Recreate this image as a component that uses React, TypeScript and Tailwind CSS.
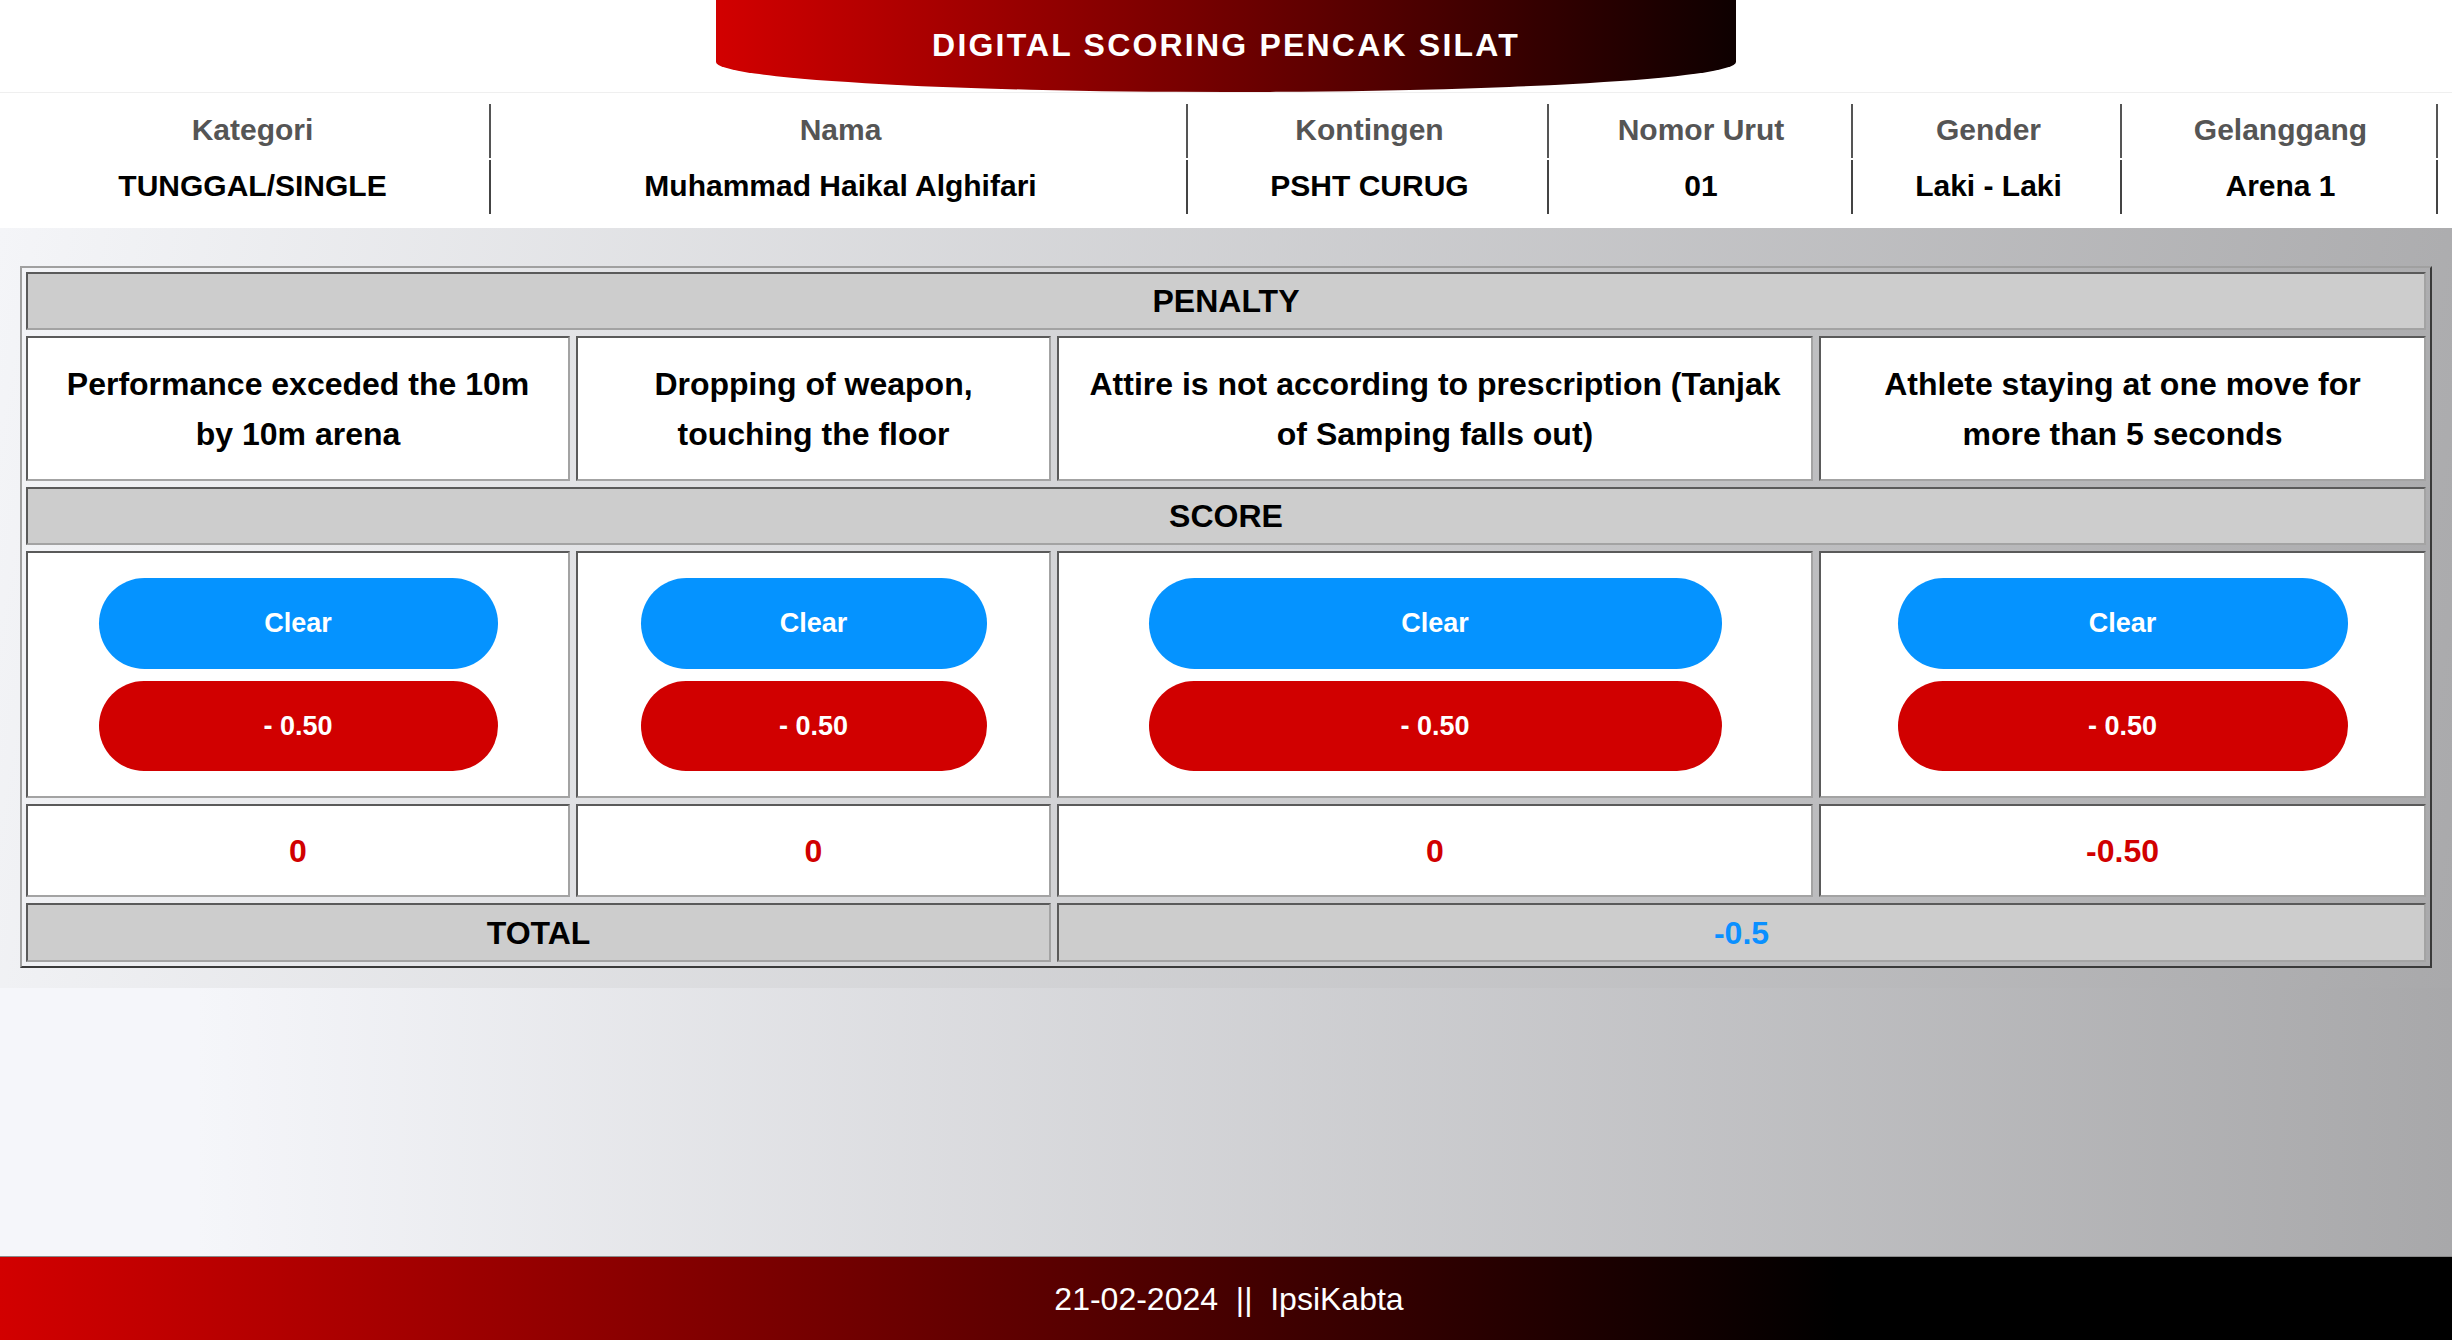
export default function App() {
  const info = [
    { label: "Kategori", value: "TUNGGAL/SINGLE", pad: "pl-[16px]" },
    { label: "Nama", value: "Muhammad Haikal Alghifari", pad: "pl-[4px]" },
    { label: "Kontingen", value: "PSHT CURUG", pad: "pl-[4px]" },
    { label: "Nomor Urut", value: "01", pad: "pl-[2px]" },
    { label: "Gender", value: "Laki - Laki", pad: "pl-[4px]" },
    { label: "Gelanggang", value: "Arena 1", pad: "pl-[3px]" },
  ];
  const penalties = [
    "Performance exceded the 10m by 10m arena",
    "Dropping of weapon, touching the floor",
    "Attire is not according to prescription (Tanjak of Samping falls out)",
    "Athlete staying at one move for more than 5 seconds",
  ];
  const btnW = ["w-[399px]", "w-[346px]", "w-[573px]", "w-[450px]"];
  const values = ["0", "0", "0", "-0.50"];

  const cell =
    "border-2 border-t-[#5a5a5a] border-l-[#5a5a5a] border-b-[#a3a3a3] border-r-[#a3a3a3]";

  return (
    <div className="min-h-screen flex flex-col font-['Liberation_Sans',Arial,sans-serif] bg-[linear-gradient(to_right,#f5f6fa_8%,#a8a8aa)]">
      {/* Banner */}
      <header className="h-[93px] bg-white flex justify-center border-b border-[#efefef]">
        <div className="w-[1020px] h-[92px] rounded-b-[50%_30px] bg-[linear-gradient(to_right,#d20000,#0e0000)] flex items-center justify-center pb-[3px]">
          <h1 className="text-white font-bold text-[32px] tracking-[2.2px] leading-none">
            DIGITAL SCORING PENCAK SILAT
          </h1>
        </div>
      </header>

      {/* Info */}
      <section className="h-[135px] bg-white pt-[11px]">
        <div className="grid grid-cols-[491px_697px_361px_304px_269px_316px] grid-rows-[54px_54px] gap-y-[2px] w-[2438px]">
          {info.map((i) => (
            <div
              key={i.label + "l"}
              className={`${i.pad} pb-[3px] border-r-2 border-[#555] flex items-center justify-center text-[30px] font-bold text-[#555]`}
            >
              {i.label}
            </div>
          ))}
          {info.map((i) => (
            <div
              key={i.label + "v"}
              className={`${i.pad} pb-[3px] border-r-2 border-[#444] flex items-center justify-center text-[30px] font-bold text-black`}
            >
              {i.value}
            </div>
          ))}
        </div>
      </section>

      {/* Table section */}
      <section className="h-[760px] pt-[38px] px-[20px] bg-[linear-gradient(100deg,#f4f5f8,#a9a9ab)]">
        <div className="w-[2412px] border-2 border-t-[#a0a0a0] border-l-[#a0a0a0] border-b-[#3a3a3a] border-r-[#3a3a3a] p-[4px]">
          <div className="grid grid-cols-[544px_475px_756px_607px] gap-[6px] text-[32px] font-bold text-black">
            <div className={`${cell} col-span-4 h-[58px] bg-[#cdcdcd] flex items-center justify-center`}>
              PENALTY
            </div>
            {penalties.map((p) => (
              <div
                key={p}
                className={`${cell} h-[145px] bg-white flex items-center justify-center text-center px-[24px] leading-[50px]`}
              >
                {p}
              </div>
            ))}
            <div className={`${cell} col-span-4 h-[58px] bg-[#cdcdcd] flex items-center justify-center`}>
              SCORE
            </div>
            {btnW.map((w, idx) => (
              <div
                key={"b" + idx}
                className={`${cell} h-[247px] bg-white flex flex-col items-center justify-center gap-[12px]`}
              >
                <button
                  className={`${w} h-[91px] rounded-full bg-[#0593ff] text-white text-[27px] font-bold`}
                >
                  Clear
                </button>
                <button
                  className={`${w} h-[90px] rounded-full bg-[#d10000] text-white text-[27px] font-bold`}
                >
                  - 0.50
                </button>
              </div>
            ))}
            {values.map((v, idx) => (
              <div
                key={"v" + idx}
                className={`${cell} h-[93px] bg-white flex items-center justify-center text-[#d10000]`}
              >
                {v}
              </div>
            ))}
            <div className={`${cell} col-span-2 h-[59px] bg-[#cdcdcd] flex items-center justify-center`}>
              TOTAL
            </div>
            <div className={`${cell} col-span-2 h-[59px] bg-[#cdcdcd] flex items-center justify-center text-[#0a90ff]`}>
              -0.5
            </div>
          </div>
        </div>
      </section>

      <div className="flex-1" />

      {/* Footer */}
      <footer className="h-[84px] border-t border-[#8a8a8a] bg-[linear-gradient(to_right,#d20000,#000000_75%)] flex items-center justify-center">
        <span className="text-white text-[32px] leading-none pl-[6px]">
          21-02-2024{"\u00a0\u00a0"}||{"\u00a0\u00a0"}IpsiKabta
        </span>
      </footer>
    </div>
  );
}
